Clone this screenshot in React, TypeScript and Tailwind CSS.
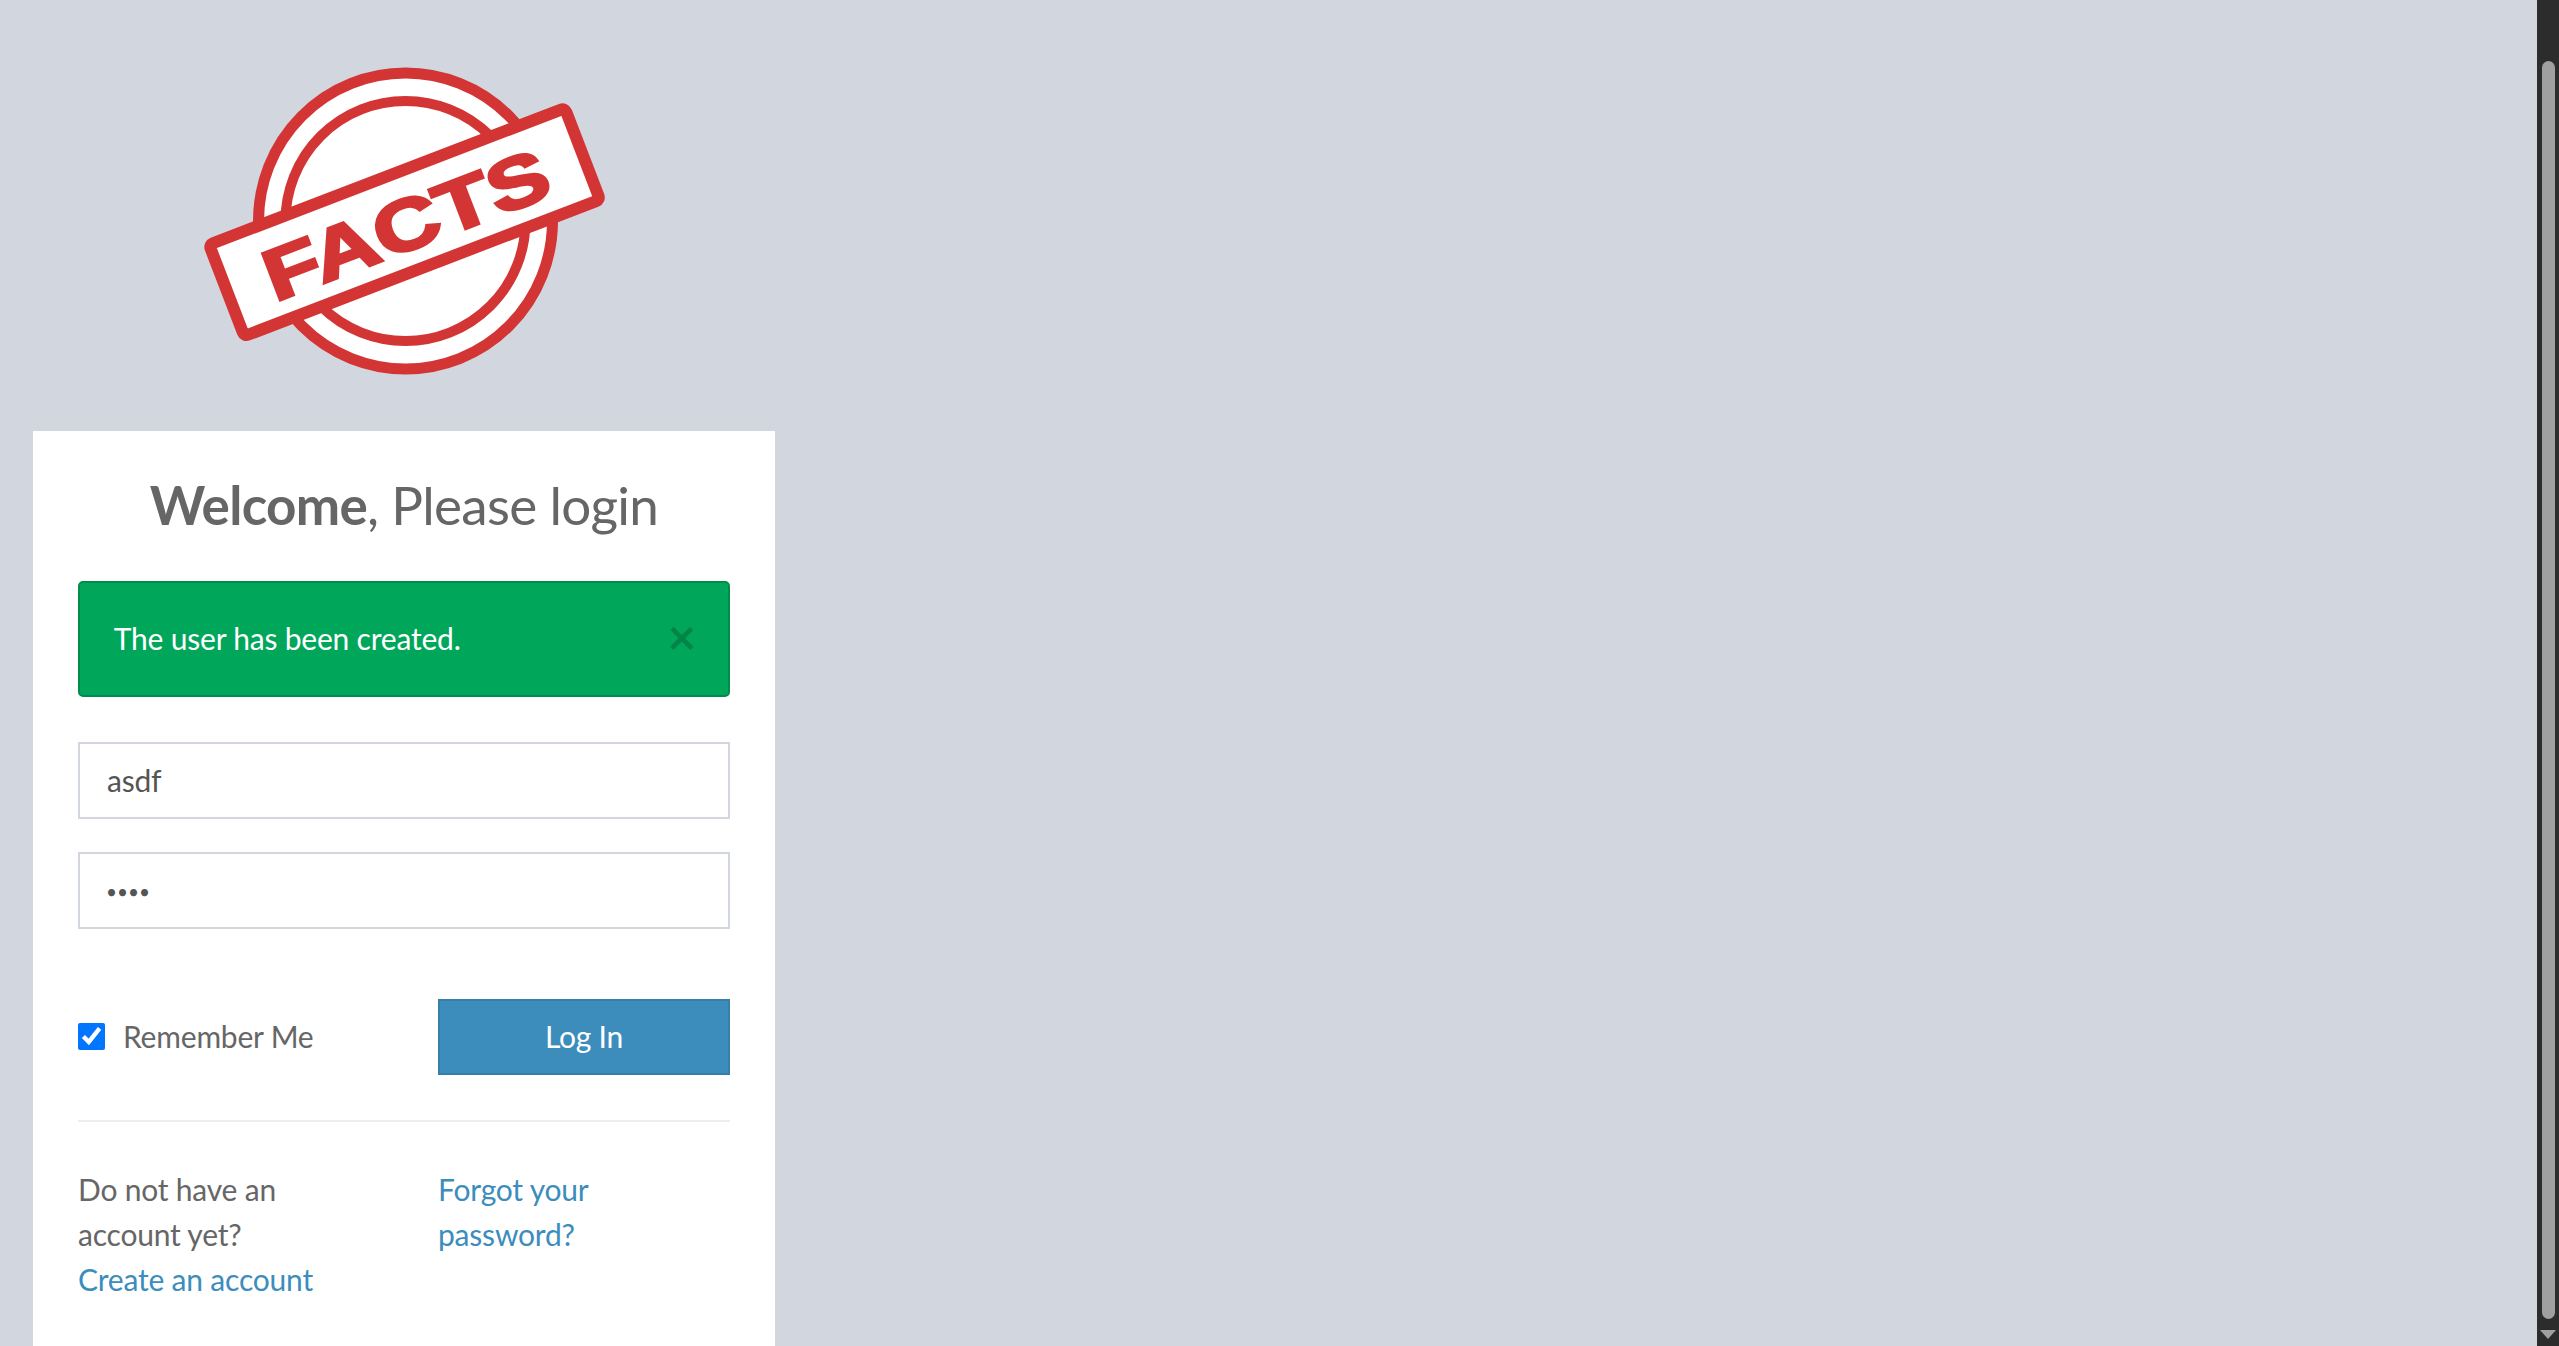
export default function App() {
  return (
    <div className="flex h-screen overflow-hidden bg-[#d2d6de] font-['Lato','Open_Sans',sans-serif] text-[30px] leading-[45px] tracking-[-0.2px] text-[#666]">
      <main className="flex-1 min-w-0 h-screen overflow-hidden pl-[33px]">
        <div className="w-[742px] h-[431px] shrink-0 relative">
          <svg viewBox="33 0 742 431" className="w-[742px] h-[431px] blur-[0.5px]">
            <ellipse cx="405.5" cy="221" rx="147" ry="148" fill="#fff" stroke="#d33535" strokeWidth="11" />
            <ellipse cx="405.5" cy="221" rx="120" ry="120" fill="#fff" stroke="#d33535" strokeWidth="10" />
            <g transform="rotate(-21 405 222)">
              <rect x="214" y="173" width="381" height="98" rx="4" fill="#fff" stroke="#d33535" strokeWidth="12" />
              <text x="405" y="250" textAnchor="middle" textLength="300" lengthAdjust="spacingAndGlyphs" fontFamily="'Liberation Sans', Arial, sans-serif" fontWeight="700" fontSize="72" fill="#d33535" stroke="#d33535" strokeWidth="3">FACTS</text>
            </g>
          </svg>
        </div>
        <div className="w-[742px] bg-white px-[45px] pt-[45px] pb-[60px]">
          <p className="h-[60px] mb-[45px] text-center text-[53px] leading-[58px] text-[#666] tracking-[-0.7px]">
            <b>Welcome</b>, Please login
          </p>
          <div className="relative h-[116px] rounded-[5px] border-2 border-[#008d4c] bg-[#00a65a] pl-[33.75px] pb-[2px] text-white flex items-center">
            <span>The user has been created.</span>
            <span className="absolute right-[32px] top-[30px] text-[50px] leading-[47px] font-bold text-black opacity-20">×</span>
          </div>
          <input readOnly value="asdf" className="mt-[45px] block w-full h-[77px] border-2 border-[#d2d6de] bg-white px-[27px] pb-[2px] text-[#555] outline-none" />
          <input readOnly type="password" value="asdf" className="mt-[33px] block w-full h-[77px] border-2 border-[#d2d6de] bg-white pl-[26px] pr-[27px] pt-[2px] text-[19px] tracking-normal text-[#555] outline-none" />
          <div className="mt-[70px] flex items-center justify-between">
            <label className="flex items-center gap-[18px] text-[#666] pb-[2px]">
              <input type="checkbox" readOnly checked className="m-0 w-[27px] h-[27px] accent-[#0075ff]" />
              Remember Me
            </label>
            <button className="w-[292px] h-[76px] border-2 border-[#367fa9] bg-[#3c8dbc] pb-[2px] text-white text-center">Log In</button>
          </div>
          <hr className="mt-[45px] border-0 h-[2px] bg-[#eee]" />
          <div className="mt-[45px] flex">
            <div className="w-[360px] text-[#666]">
              <div>Do not have an<br />account yet?</div>
              <a className="block text-[#3c8dbc]">Create an account</a>
            </div>
            <a className="text-[#3c8dbc]">Forgot your<br />password?</a>
          </div>
        </div>
      </main>
      <aside className="w-[22px] shrink-0 h-screen bg-[#2c2c2c] flex flex-col items-center pt-[61px] pb-[7px]">
        <div className="w-[13px] flex-1 rounded-full bg-[#a0a0a0]" />
        <svg viewBox="0 0 16 9" className="mt-[11px] w-[16px] h-[9px]"><path d="M0 0h16L8 9z" fill="#a0a0a0" /></svg>
      </aside>
    </div>
  );
}
